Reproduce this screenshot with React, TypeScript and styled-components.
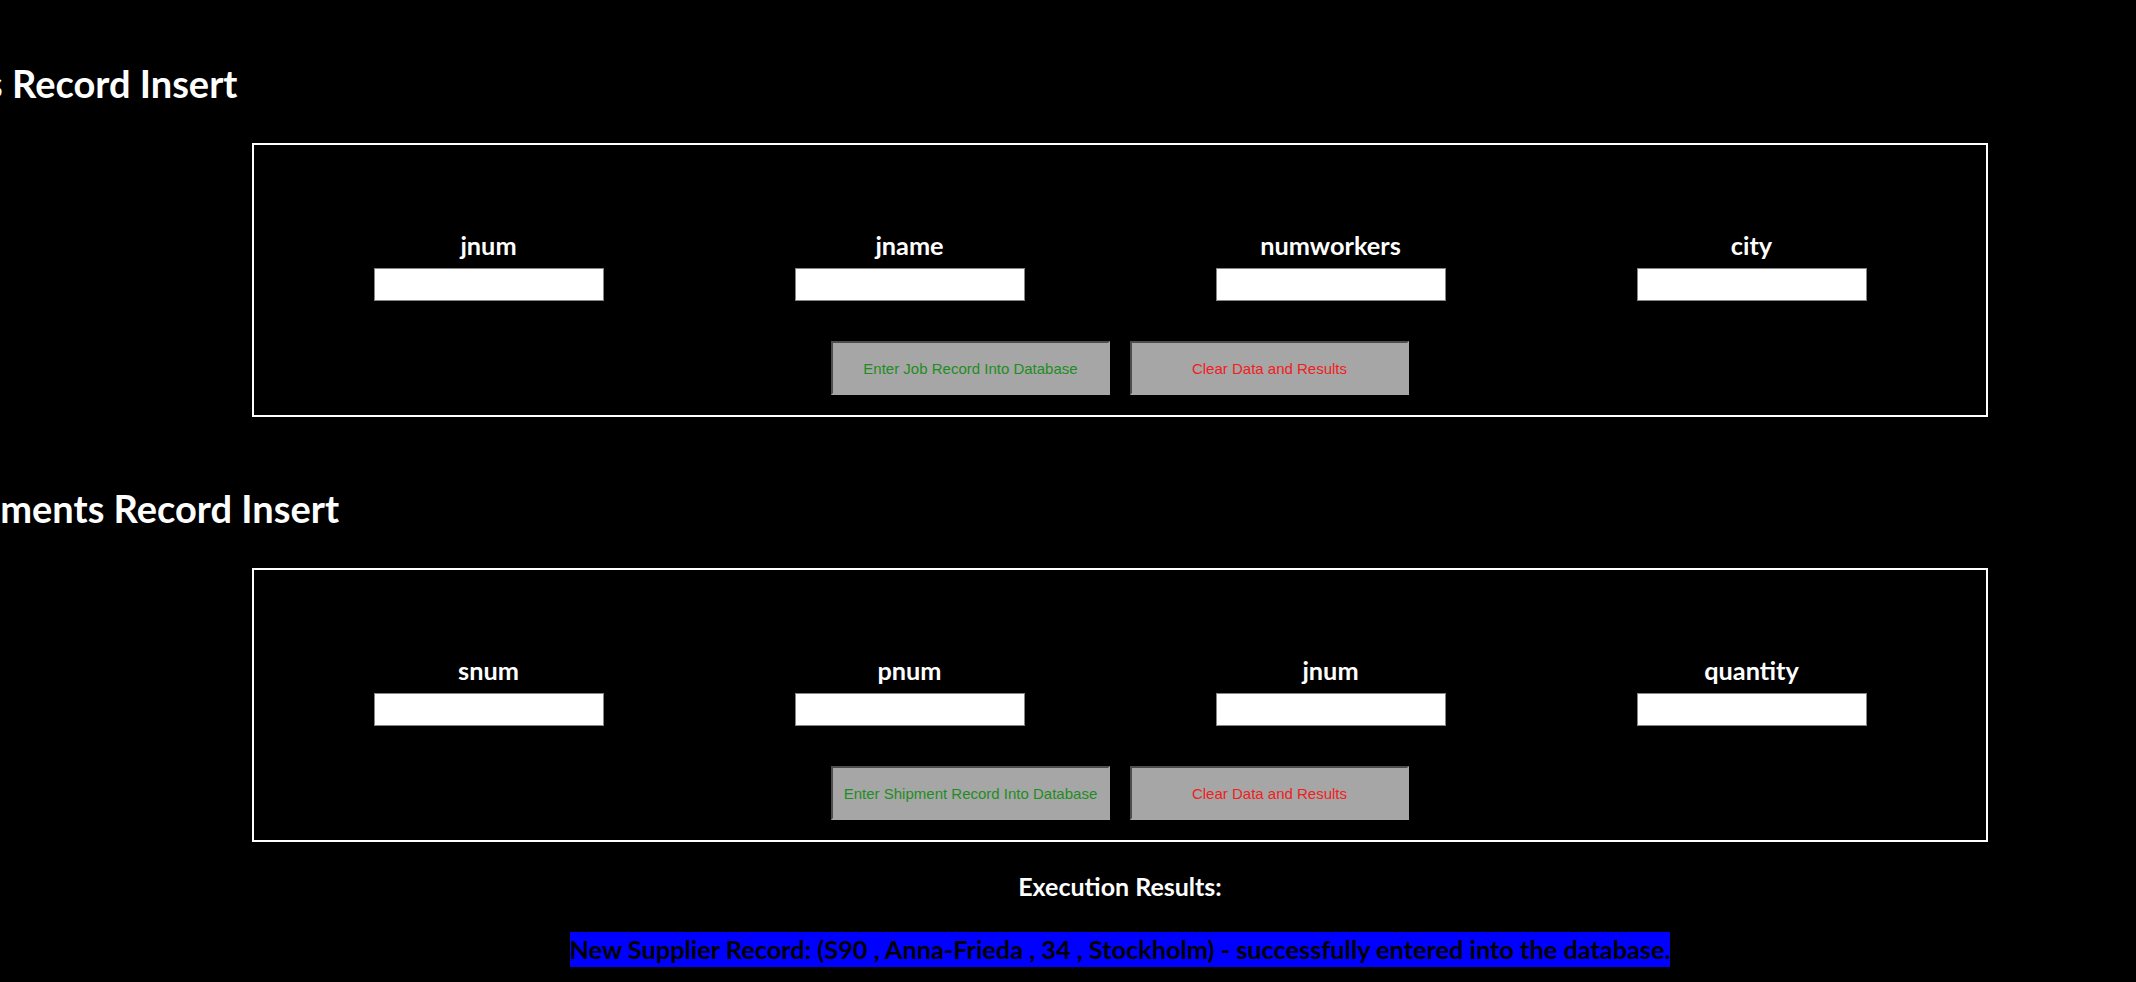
import React from "react";
import styled, { createGlobalStyle } from "styled-components";

const GlobalStyle = createGlobalStyle`
  html, body {
    margin: 0;
    padding: 0;
    background: #000;
  }
  body {
    font-family: "Lato", "Carlito", "Liberation Sans", sans-serif;
    color: #fff;
    overflow: hidden;
  }
`;

const Page = styled.main`
  padding: 63px 0 0 252px;
  width: 1736px;
`;

const Title = styled.h1<{ $top?: number }>`
  margin: ${(p) => p.$top ?? 0}px 0 40px -325px;
  font-size: 38px;
  line-height: 40px;
  font-weight: 700;
  color: #fff;
  white-space: nowrap;
`;

const Panel = styled.form`
  box-sizing: border-box;
  height: 274px;
  border: 2px solid #fff;
  padding: 85px 0 20px;
  display: flex;
  flex-direction: column;
  align-items: center;
`;

const Fields = styled.div`
  display: grid;
  grid-template-columns: repeat(4, 421px);
  justify-content: center;
`;

const Field = styled.label`
  display: flex;
  flex-direction: column;
  align-items: center;
  gap: 8px;
`;

const FieldName = styled.span`
  font-size: 25.3px;
  line-height: 30px;
  font-weight: 700;
  color: #fff;
`;

const TextInput = styled.input`
  box-sizing: border-box;
  width: 230px;
  height: 33px;
  border: 1px solid #858585;
  background: #fff;
  margin: 0;
  padding: 0 4px;
  outline: none;
`;

const Actions = styled.div`
  margin-top: 40px;
  display: flex;
  gap: 20px;
  justify-content: center;
`;

const ActionButton = styled.button<{ $tone: "go" | "clear" }>`
  box-sizing: border-box;
  width: 279px;
  height: 54px;
  margin: 0;
  padding: 0;
  background: #a6a6a6;
  border-style: solid;
  border-width: 2px;
  border-color: #4d4d4d #a6a6a6 #a6a6a6 #4d4d4d;
  font-family: "Liberation Sans", Arial, sans-serif;
  font-size: 15px;
  color: ${(p) => (p.$tone === "go" ? "#1f8c1f" : "#f02020")};
  cursor: pointer;
`;

const Results = styled.section`
  margin-top: 31px;
  display: flex;
  flex-direction: column;
  align-items: center;
`;

const ResultsHeading = styled.h3`
  margin: 0;
  font-size: 25px;
  line-height: 26px;
  font-weight: 700;
  color: #fff;
`;

const ResultMessage = styled.span`
  margin-top: 33px;
  display: inline-block;
  background: #0000ff;
  color: #000;
  font-size: 25.3px;
  line-height: 35px;
  font-weight: 700;
  white-space: nowrap;
`;

type FormDef = {
  title: string;
  fields: string[];
  submit: string;
  top?: number;
};

const forms: FormDef[] = [
  {
    title: "Jobs Record Insert",
    fields: ["jnum", "jname", "numworkers", "city"],
    submit: "Enter Job Record Into Database",
  },
  {
    title: "Shipments Record Insert",
    fields: ["snum", "pnum", "jnum", "quantity"],
    submit: "Enter Shipment Record Into Database",
    top: 71,
  },
];

export default function App() {
  return (
    <>
      <GlobalStyle />
      <Page>
        {forms.map((f) => (
          <React.Fragment key={f.title}>
            <Title $top={f.top}>{f.title}</Title>
            <Panel onSubmit={(e) => e.preventDefault()}>
              <Fields>
                {f.fields.map((name) => (
                  <Field key={name}>
                    <FieldName>{name}</FieldName>
                    <TextInput type="text" name={name} />
                  </Field>
                ))}
              </Fields>
              <Actions>
                <ActionButton type="submit" $tone="go">
                  {f.submit}
                </ActionButton>
                <ActionButton type="reset" $tone="clear">
                  Clear Data and Results
                </ActionButton>
              </Actions>
            </Panel>
          </React.Fragment>
        ))}
        <Results>
          <ResultsHeading>Execution Results:</ResultsHeading>
          <ResultMessage>
            New Supplier Record: (S90 , Anna-Frieda , 34 , Stockholm) - successfully entered into the database.
          </ResultMessage>
        </Results>
      </Page>
    </>
  );
}
